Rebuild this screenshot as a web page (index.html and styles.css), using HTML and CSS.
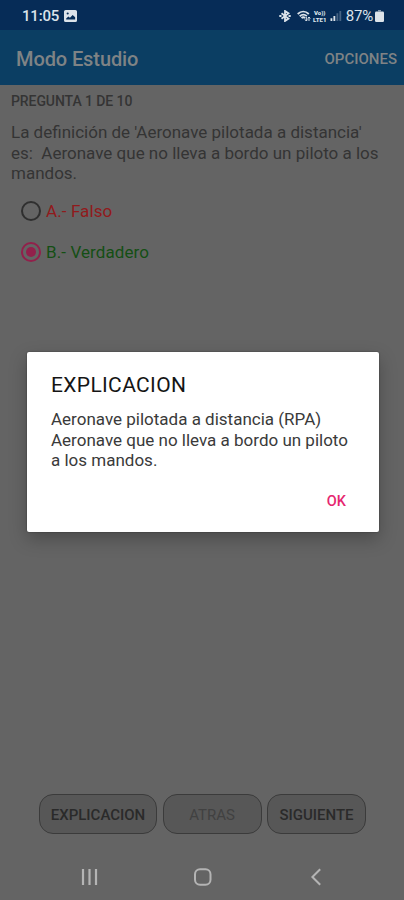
FILE: index.html
```html
<!DOCTYPE html>
<html lang="es">
<head>
    <meta charset="UTF-8">
    <meta name="viewport" content="width=device-width, initial-scale=1.0">
    <title>Modo Estudio</title>
    <link rel="stylesheet" href="styles.css">
</head>
<body>
    <div class="screen">
        <div class="status-bar">
            <span class="clock">11:05</span>
            <svg class="icon-picture" width="13" height="12" viewBox="0 0 12 12" preserveAspectRatio="none">
                <path fill="currentColor" fill-rule="evenodd" d="M1.5 0h9A1.5 1.5 0 0 1 12 1.5v9a1.5 1.5 0 0 1-1.5 1.5h-9A1.5 1.5 0 0 1 0 10.5v-9A1.5 1.5 0 0 1 1.5 0zM2 9.5h8.3V7.2L8 5 5.5 7.8 4 6.6 2 8.4zM3.4 2.4a1 1 0 1 0 0 2 1 1 0 0 0 0-2z"/>
            </svg>
            <div class="status-icons">
                <svg width="12" height="12" viewBox="0 0 12 12" fill="none" stroke="currentColor" stroke-width="1.8">
                    <path d="M2.500 3.200l7 5.400L6 11V1l3.500 2.400-7 5.400"/>
                    <path d="M.3 6h2.200M9.500 6h2.200" stroke-width="2"/>
                </svg>
                <svg class="icon-wifi" width="14" height="12" viewBox="0 0 14 12" fill="none" stroke="currentColor">
                    <path d="M.7 4C4 .8 8.500.8 11.800 4M2.700 6.200c2.300-2 5-2 7.200 0M4.500 8c1.200-1 2.400-1 3.600 0" stroke-width="1.800"/>
                    <path d="M9.300 7v4M8 9.500L9.300 11l1.300-1.500M12 11V7M10.800 8.500L12 7l1.300 1.500" stroke-width="1"/>
                </svg>
                <span class="volte"><span>Vo))</span><span>LTE1</span></span>
                <svg class="icon-signal" width="12" height="11" viewBox="0 0 12 12" fill="currentColor">
                    <path d="M0 9h2v3H0zM3.200 6.500h2V12h-2z"/>
                    <path d="M6.500 3.500h2V12h-2zM9.700 1h2v11h-2z" opacity=".3"/>
                </svg>
                <span class="battery-level">87%</span>
                <svg width="9" height="12" viewBox="0 0 9 12" fill="currentColor">
                    <path d="M3 0h3v1.400H3z" opacity=".6"/>
                    <rect y="1.500" width="9" height="10.500" rx="1.200"/>
                </svg>
            </div>
        </div>

        <header class="app-bar">
            <h1>Modo Estudio</h1>
            <span class="options">OPCIONES</span>
        </header>

        <main class="content">
            <div class="counter">PREGUNTA 1 DE 10</div>
            <p class="question">
                La definición de 'Aeronave pilotada a distancia'<br>
                es:&nbsp; Aeronave que no lleva a bordo un piloto a los<br>
                mandos.
            </p>
            <div class="answer wrong">
                <span class="radio"></span>
                <span>A.- Falso</span>
            </div>
            <div class="answer right">
                <span class="radio checked"></span>
                <span>B.- Verdadero</span>
            </div>
        </main>

        <div class="actions">
            <button class="btn-explain">EXPLICACION</button>
            <button disabled>ATRAS</button>
            <button>SIGUIENTE</button>
        </div>

        <nav class="nav-bar">
            <svg width="18" height="18" viewBox="0 0 18 18" stroke="currentColor" stroke-width="2.200">
                <path d="M2 1v16M8.500 1v16M15 1v16"/>
            </svg>
            <svg width="18" height="18" viewBox="0 0 18 18" fill="none" stroke="currentColor" stroke-width="2">
                <rect x="1" y="1.200" width="15.500" height="15.500" rx="5"/>
            </svg>
            <svg width="18" height="18" viewBox="0 0 18 18" fill="none" stroke="currentColor" stroke-width="2">
                <path d="M13.200 1.200L5.400 9l7.800 7.800"/>
            </svg>
        </nav>

        <div class="dialog">
            <h2>EXPLICACION</h2>
            <p>
                Aeronave pilotada a distancia (RPA)<br>
                Aeronave que no lleva a bordo un piloto<br>
                a los mandos.
            </p>
            <button class="ok">OK</button>
        </div>
    </div>
</body>
</html>
```
FILE: styles.css
```css
:root {
    --status: #062c57;
    --primary: #0b3e63;
    --background: #646464;
    --text: #343434;
    --accent: #e6266f;
}

* {
    box-sizing: border-box;
}

body {
    margin: 0;
    font-family: Roboto, "Liberation Sans", sans-serif;
    background-color: var(--background);
}

h1, h2, p {
    margin: 0;
}

button {
    font-family: inherit;
}

svg {
    display: block;
    flex-shrink: 0;
}

.screen {
    position: relative;
    display: flex;
    flex-direction: column;
    width: 404px;
    height: 900px;
    overflow: hidden;
    white-space: nowrap;
}

.status-bar {
    display: flex;
    align-items: center;
    height: 30px;
    padding: 1px 20px 0 22px;
    background-color: var(--status);
    color: #dce3ea;
}

.clock {
    font-size: 15px;
    font-weight: 500;
    letter-spacing: -0.2px;
}

.icon-picture {
    margin-left: 5px;
}

.status-icons {
    display: flex;
    align-items: center;
    margin-left: auto;
}

.icon-wifi {
    margin-left: 6px;
}

.volte {
    display: flex;
    flex-direction: column;
    width: 16px;
    margin-left: 1px;
    font-size: 6px;
    font-weight: 900;
    line-height: 7px;
    text-align: center;
}

.icon-signal {
    margin-left: 2px;
}

.battery-level {
    margin: 0 2px 0 4px;
    font-size: 15px;
    letter-spacing: -0.2px;
}

.app-bar {
    display: flex;
    align-items: center;
    justify-content: space-between;
    height: 55px;
    padding: 3px 7px 0 16px;
    background-color: var(--primary);
    color: #7f8385;
}

.app-bar h1 {
    font-size: 20px;
    font-weight: 500;
    letter-spacing: -0.1px;
}

.options {
    font-size: 15px;
    font-weight: 500;
}

.content {
    flex: 1;
    padding: 7px 11px;
    color: var(--text);
}

.counter {
    font-size: 14px;
    font-weight: 500;
    line-height: 18px;
    letter-spacing: -0.08px;
}

.question {
    margin: 12px 0 7px;
    font-size: 17px;
    line-height: 20.5px;
}

.answer {
    display: flex;
    align-items: center;
    gap: 5px;
    height: 41px;
    padding-left: 10px;
    font-size: 17px;
    letter-spacing: 0.1px;
}

.wrong {
    color: #911a1c;
}

.right {
    color: #144f14;
}

.radio {
    display: flex;
    align-items: center;
    justify-content: center;
    width: 20px;
    height: 20px;
    border: 2px solid #2f2f2f;
    border-radius: 50%;
}

.radio.checked {
    border-color: #92204b;
}

.radio.checked::after {
    content: "";
    width: 10px;
    height: 10px;
    border-radius: 50%;
    background-color: #92204b;
}

.actions {
    display: flex;
    gap: 5.5px;
    padding-left: 39px;
}

.actions button {
    width: 99px;
    height: 40px;
    padding: 1px 0 0;
    border: 1px solid #3b3b3b;
    border-radius: 14px;
    background-color: #575757;
    color: #2a2a2a;
    font-size: 15px;
    font-weight: 500;
}

.actions .btn-explain {
    width: 118px;
}

.actions button:disabled {
    color: #414141;
    font-weight: 400;
}

.nav-bar {
    display: flex;
    justify-content: space-between;
    align-items: center;
    height: 66px;
    padding: 20px 79px 0 81px;
    color: #b4b4b4;
}

.dialog {
    position: absolute;
    top: 352px;
    left: 27px;
    width: 352px;
    height: 180px;
    padding: 21px 24px;
    border-radius: 2px;
    background-color: #fff;
    box-shadow: 0 7px 18px rgba(0, 0, 0, 0.25), 0 0 2px rgba(0, 0, 0, 0.4);
}

.dialog h2 {
    color: #151515;
    font-size: 21px;
    font-weight: 400;
    line-height: 25px;
    letter-spacing: 0.35px;
}

.dialog p {
    margin-top: 11px;
    color: #3a3a3a;
    font-size: 17px;
    line-height: 20.5px;
}

.ok {
    display: block;
    margin: 22px 9px 0 auto;
    padding: 0;
    border: none;
    background: none;
    color: var(--accent);
    font-size: 14.5px;
    font-weight: 500;
    line-height: 18px;
}
```
